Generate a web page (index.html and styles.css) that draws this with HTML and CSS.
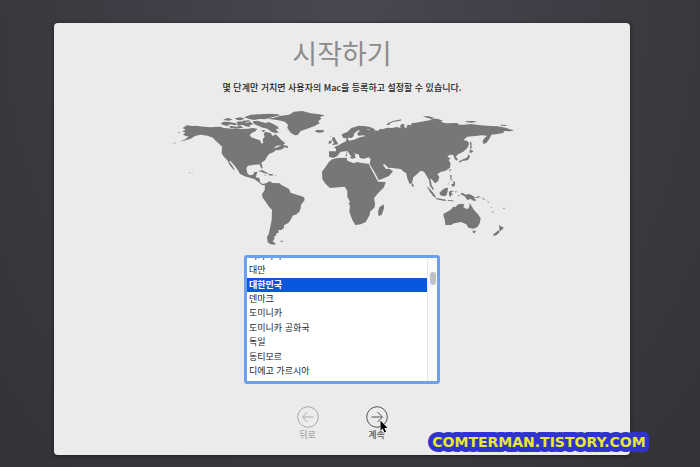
FILE: index.html
```html
<!DOCTYPE html>
<html lang="ko">
<head>
<meta charset="utf-8">
<meta name="viewport" content="width=device-width, initial-scale=1">
<title>시작하기</title>
<link rel="stylesheet" href="styles.css">
</head>
<body>
<main class="panel">
  <h1 class="title">시작하기</h1>
  <label class="intro" for="country">몇 단계만 거치면 사용자의 Mac을 등록하고 설정할 수 있습니다.</label>
  <svg class="map" viewBox="4 24 1080 414" aria-hidden="true">
    <!-- North America -->
    <path d="M66 84L78 76 95 78 104 77 130 80 150 82 178 80 190 84 215 86 240 87 262 86 275 84 290 86 285 93 272 100 267 106 272 112 284 116 298 121 303 131 308 129 306 118 312 110 309 101 314 95 330 99 336 108 345 103 353 110 362 120 374 130 366 135 348 137 338 146 352 141 365 134 381 138 382 144 370 142 366 147 356 150 345 151 338 157 325 162 318 172 314 180 302 188 306 203 303 206 296 193 282 194 262 197 257 205 260 220 267 226 277 224 281 216 290 216 287 226 285 232 296 234 299 248 308 252 318 249 314 256 305 256 292 245 282 238 268 233 250 228 238 221 231 209 222 197 210 184 204 183 214 196 223 211 217 208 207 195 200 181 190 171 183 160 184 140 175 131 163 121 157 113 140 107 120 104 103 108 90 116 75 121 58 125 75 117 84 109 74 108 67 103 75 98 64 94 75 90Z"/>
    <path d="M180 70L190 65 205 66 222 69 230 72 225 76 207 73 200 78 188 75ZM187 60L200 54 216 58 206 62ZM222 55L240 52 252 56 240 61 230 60ZM228 65L248 64 258 68 270 66 278 73 266 76 270 81 256 79 245 74 232 78ZM250 52L270 44 295 43 325 41 352 43 358 46 340 50 325 54 312 58 296 57 280 60 268 58ZM276 64L290 62 303 66 315 69 325 66 339 73 352 80 354 88 345 86 350 94 356 97 344 99 332 95 320 86 307 83 292 77 280 72ZM206 77L228 80 240 77 248 83 228 86 208 83ZM302 90L315 91 308 97ZM245 62L268 61 266 65 250 66Z"/>
    <path d="M318 56L340 53 357 48 385 44 400 35 425 33 450 40 475 43 492 46 478 51 482 56 473 63 477 70 462 78 440 86 420 93 411 105 403 106 390 98 380 84 382 74 372 65 350 60ZM463 93L468 90 490 91 489 96 476 98 466 96Z"/>
    <path d="M292 214L304 210 320 218 324 222 311 220 302 215ZM324 221L338 223 335 227 324 226ZM343 225L347 225 346 228ZM311 224L317 225 313 227ZM84 216L89 217 87 219ZM93 219L96 221 94 223ZM40 129L47 127 42 131ZM32 131L36 130 34 132ZM50 97L58 96 56 99ZM359 422L368 422 365 425 360 425Z"/>
    <!-- South America -->
    <path d="M313 253L322 246 328 244 335 249 357 250 363 256 370 259 385 267 390 278 408 284 418 287 430 292 432 300 421 315 420 325 416 335 408 343 396 347 391 358 384 368 370 376 370 384 362 390 352 390 355 397 346 401 347 406 340 410 342 416 336 424 345 431 342 434 330 433 321 427 319 412 324 402 327 390 333 360 334 330 325 320 315 305 306 293 304 282 312 271Z"/>
    <g transform="translate(480 0)">
      <!-- Europe and Asia -->
      <path d="M63 106L65 102 80 96 92 84 115 77 135 79 150 82 163 88 160 91 172 92 180 86 186 88 200 83 215 84 228 81 240 84 238 77 245 71 251 73 252 84 262 74 272 76 272 70 285 68 310 64 330 60 360 63 368 68 378 70 410 69 415 74 430 74 450 72 480 76 510 78 530 79 555 83 568 88 580 91 570 94 550 93 548 99 530 102 512 104 507 115 498 128 488 132 486 122 492 113 500 107 482 106 465 108 440 110 428 120 440 123 445 130 442 142 428 155 412 163 405 170 412 178 408 182 402 177 398 165 386 164 380 172 390 174 384 181 390 190 388 203 375 212 360 216 350 222 356 232 352 244 343 250 335 240 329 235 333 256 340 268 337 270 328 258 325 240 318 228 310 215 300 212 287 224 278 232 274 248 267 253 260 235 256 218 250 216 240 207 215 204 203 203 190 191 187 195 196 207 206 206 217 214 205 228 174 241 170 232 160 214 147 192 150 177 144 172 130 176 118 174 113 162 103 163 104 174 96 176 80 153 76 154 60 155 50 168 38 174 25 170 25 154 46 154 46 146 40 142 55 135 64 130 76 124 78 115 68 114Z"/>
      <path d="M34 113L42 111 45 119 51 128 52 133 34 136 40 128 35 121ZM25 124L33 121 32 130 23 131ZM29 107L33 110 30 111ZM76 162L79 162 79 169 75 169ZM86 172L97 171 95 177ZM76 155L80 158 78 161ZM197 75L203 68 220 62 242 58 240 62 220 65 208 70 206 75ZM306 49L325 49 342 54 330 56 318 53ZM328 56L350 56 368 62 356 64 338 62ZM434 64L455 63 470 65 452 68 437 67ZM540 74L558 75 557 78 541 77ZM0 45L10 45 0 48ZM0 93L8 92 4 97 0 97Z"/>
      <!-- Africa -->
      <path d="M35 178L50 174 78 173 80 182 100 190 108 186 130 190 144 191 152 208 165 232 172 245 195 246 190 262 172 280 160 295 163 310 162 322 148 335 147 345 135 366 120 373 104 375 95 360 86 335 88 318 84 310 88 305 80 290 80 272 72 260 55 262 28 264 15 252 5 238 4 215 15 200 25 185ZM189 313L190 325 183 345 174 348 172 335 176 322Z"/>
      <!-- East Asian and Pacific islands -->
      <path d="M447 125L452 127 453 144 448 150 449 136ZM446 151L454 150 458 155 448 160ZM444 162L448 170 442 180 432 182 424 183 416 189 415 184 427 178 437 174 442 168ZM388 207L391 208 388 215 386 212ZM273 247L279 256 278 261 273 258ZM388 225L393 226 392 238 398 242 390 240ZM397 243L403 246 403 257 396 260 391 253 398 252ZM384 248L388 242 380 258Z"/>
      <path d="M318 259L325 264 335 275 344 287 346 294 338 289 328 276ZM356 279L365 270 374 264 382 263 381 273 378 285 371 289 359 286ZM345 294L360 296 376 299 375 303 357 300 347 298ZM380 300L395 301 402 304 384 303ZM385 276L388 273 401 272 391 278 398 284 392 284 390 292 385 286ZM403 275L408 272 406 279ZM410 285L418 285 416 288ZM420 279L428 280 435 284 444 282 454 286 464 293 460 295 468 301 459 303 450 297 440 300 432 289 422 284ZM463 292L476 289 471 295ZM474 288L480 291 477 293ZM485 293L493 298 492 300 484 295ZM497 301L505 307 504 309ZM510 319L514 323 511 323ZM512 333L520 337 518 339ZM547 324L553 323 550 328Z"/>
      <!-- Australia and New Zealand -->
      <path d="M369 341L380 335 389 330 398 320 405 321 410 314 420 311 431 313 428 322 440 328 446 321 447 309 453 319 460 330 473 344 480 355 477 370 470 382 457 386 443 383 437 373 430 370 421 366 401 370 390 375 374 375 372 358 368 347ZM455 392L466 392 462 400 458 399ZM535 374L540 379 550 383 542 391 537 395 536 386ZM533 391L537 396 529 404 520 408 517 404Z"/>
      <path class="water" d="M87 122L100 119 118 112 132 109 131 106 113 107 109 101 118 92 112 91 100 101 99 109 91 115 83 112 82 119ZM98 158L112 171 111 164ZM250 76L256 86 259 79ZM138 88L148 91 143 87Z"/>
    </g>
  </svg>
  <div class="listbox">
    <select class="countries" id="country" size="8">
      <option>뉴질랜드</option>
      <option>니제르</option>
      <option>니카라과</option>
      <option>대만</option>
      <option selected>대한민국</option>
      <option>덴마크</option>
      <option>도미니카</option>
      <option>도미니카 공화국</option>
      <option>독일</option>
      <option>동티모르</option>
      <option>디에고 가르시아</option>
      <option>라오스</option>
      <option>라이베리아</option>
    </select>
    <div class="track" aria-hidden="true"><div class="thumb"></div></div>
  </div>
  <nav class="actions">
    <button class="action" type="button" disabled>
      <svg class="arrow" viewBox="0 0 22 22" aria-hidden="true"><circle cx="11" cy="11" r="10.3"/><path d="M16.500 11H6M10.500 6L5.500 11l5 5"/></svg>
      뒤로
    </button>
    <button class="action" type="button">
      <svg class="arrow" viewBox="0 0 22 22" aria-hidden="true"><circle cx="11" cy="11" r="10.3"/><path d="M5.500 11H16M11.500 6l5 5-5 5"/></svg>
      계속
      <svg class="pointer" viewBox="0 0 8 13" aria-hidden="true"><path d="M.5.500v10l2.200-2 1.600 4 1.800-.8-1.700-3.700h3.100z"/></svg>
    </button>
  </nav>
</main>
<svg class="watermark" viewBox="0 0 232 20"><text x="116" y="15" text-anchor="middle">COMTERMAN.TISTORY.COM</text></svg>
<script src="script.js"></script>
</body>
</html>
```
FILE: styles.css
```css
* {
  box-sizing: border-box;
}

body {
  display: flex;
  min-height: 100vh;
  margin: 0;
  padding: 23px 70px 12px 54px;
  background: radial-gradient(ellipse at 50% 0, #474850 0%, #3b3c42 55%, #323237 100%);
  color: #222;
  font-family: "Noto Sans CJK KR", sans-serif;
  font-size: 9px;
}

.panel {
  display: flex;
  flex: 1;
  flex-direction: column;
  align-items: center;
  padding: 10px 16px;
  border-radius: 4px;
  background: #ebebeb;
  box-shadow: 0 1px 4px #1c1c20;
}

.title {
  margin: 0;
  color: #8c8c8c;
  font-size: 27px;
  font-weight: 400;
  line-height: 40px;
}

.intro {
  margin-top: 7px;
  color: #222;
  font-weight: 500;
  line-height: 16px;
}

.map {
  width: 100%;
  max-width: 360px;
  margin: 12px 0 9px;
  fill: #777;
}

.water {
  fill: #ebebeb;
}

.listbox {
  display: flex;
  width: 196px;
  height: 129px;
  border: 3px solid #6b9ff0;
  border-radius: 3px;
  background: #fff;
}

.countries {
  flex: 1;
  min-width: 0;
  height: 120px;
  padding: 0;
  border: 0;
  outline: 0;
  background: #fff;
  color: #222;
  font: inherit;
  overflow-y: scroll;
  scrollbar-width: none;
}

.countries option {
  min-height: 1.6em;
  padding: 0 2px;
}

.countries option:checked {
  background: linear-gradient(#0758dc, #0758dc);
  font-weight: 700;
  -webkit-text-fill-color: #fff;
}

.track {
  width: 10px;
  padding: 14px 1px 14px 2px;
  border-left: 1px solid #e6e6e6;
  background: #fafafa;
}

.thumb {
  height: 13px;
  border-radius: 3px;
  background: #c1c1c1;
}

.actions {
  display: flex;
  gap: 33px;
  margin-top: 22px;
}

.action {
  position: relative;
  display: flex;
  flex-direction: column;
  align-items: center;
  width: 36px;
  padding: 0;
  border: 0;
  background: none;
  color: #555;
  font: inherit;
  font-weight: 500;
  line-height: 14px;
}

.action:disabled {
  color: #a9a9a9;
}

.arrow {
  width: 22px;
  height: 22px;
  fill: none;
  stroke: currentColor;
}

.pointer {
  position: absolute;
  top: 14px;
  left: 21px;
  width: 8px;
  height: 13px;
  overflow: visible;
  fill: #000;
  stroke: #fff;
  stroke-width: 1;
  paint-order: stroke;
}

.watermark {
  position: absolute;
  right: 45px;
  bottom: 15px;
  width: 232px;
  height: 20px;
  overflow: visible;
  fill: #e8e832;
  stroke: #2f34cf;
  stroke-width: 10;
  stroke-linejoin: round;
  paint-order: stroke;
  font: bold 14px "DejaVu Sans", sans-serif;
}
```
FILE: script.js
```js
// Open the list just above the selected country.
const countries = document.getElementById("country");
const selected = countries.selectedOptions[0];
requestAnimationFrame(() => {
  const box = countries.getBoundingClientRect();
  countries.scrollTop += selected.getBoundingClientRect().top - box.top - 20;
});
```
